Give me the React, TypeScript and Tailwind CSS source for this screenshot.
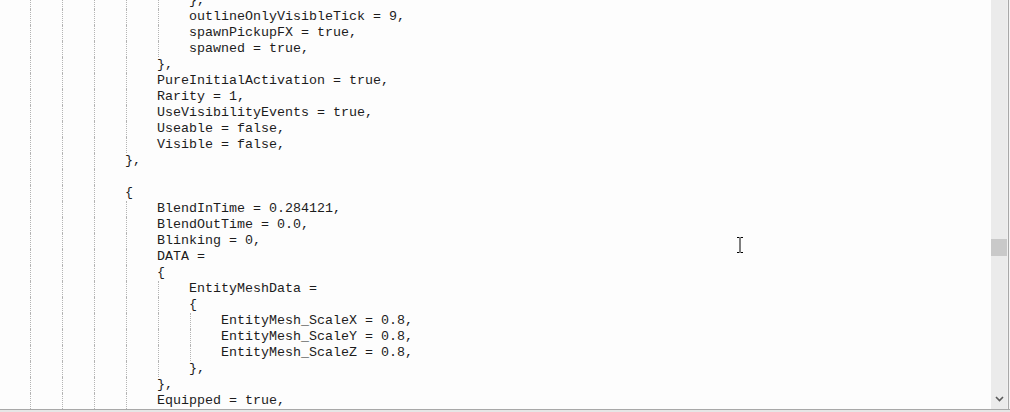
import React from 'react';

type Line = { col: number; text: string };

// code lines, col = indent in characters (col 0 sits just off the left edge)
const lines: Line[] = [
  { col: 24, text: '},' },
  { col: 24, text: 'outlineOnlyVisibleTick = 9,' },
  { col: 24, text: 'spawnPickupFX = true,' },
  { col: 24, text: 'spawned = true,' },
  { col: 20, text: '},' },
  { col: 20, text: 'PureInitialActivation = true,' },
  { col: 20, text: 'Rarity = 1,' },
  { col: 20, text: 'UseVisibilityEvents = true,' },
  { col: 20, text: 'Useable = false,' },
  { col: 20, text: 'Visible = false,' },
  { col: 16, text: '},' },
  { col: 16, text: '' },
  { col: 16, text: '{' },
  { col: 20, text: 'BlendInTime = 0.284121,' },
  { col: 20, text: 'BlendOutTime = 0.0,' },
  { col: 20, text: 'Blinking = 0,' },
  { col: 20, text: 'DATA =' },
  { col: 20, text: '{' },
  { col: 24, text: 'EntityMeshData =' },
  { col: 24, text: '{' },
  { col: 28, text: 'EntityMesh_ScaleX = 0.8,' },
  { col: 28, text: 'EntityMesh_ScaleY = 0.8,' },
  { col: 28, text: 'EntityMesh_ScaleZ = 0.8,' },
  { col: 24, text: '},' },
  { col: 20, text: '},' },
  { col: 20, text: 'Equipped = true,' },
];

const CodeLine: React.FC<{ line: Line }> = ({ line }) => {
  const stops = line.col / 4;
  return (
    <div className="flex h-[16px] items-center whitespace-pre">
      {Array.from({ length: stops }).map((_, i) => (
        <span key={i} className="flex h-[16px] w-[32px] shrink-0">
          {i > 0 && <span className="ml-px h-full border-l border-dotted border-[#b4b4b4]" />}
        </span>
      ))}
      <span className="leading-[16px]">{line.text}</span>
    </div>
  );
};

const App: React.FC = () => {
  return (
    <div className="flex h-[412px] w-[1010px] flex-col overflow-hidden bg-[#fdfdfd]">
      <div className="flex h-[409px] shrink-0">
        <div className="relative flex-1 overflow-hidden">
          <div
            className="ml-[-3px] mt-[-7px] text-[13.33px] text-[#1c1c1c]"
            style={{ fontFamily: '"Liberation Mono", "Courier New", monospace' }}
          >
            {lines.map((l, i) => (
              <CodeLine key={i} line={l} />
            ))}
          </div>
          {/* text cursor (I-beam) over the editor */}
          <svg className="absolute left-[735px] top-[236px]" width="10" height="18" viewBox="0 0 10 18">
            <path d="M2 1.5h2.5M5.5 1.5H8M5 2v14M2 16.5h2.5M5.5 16.5H8" stroke="#000" strokeWidth="1" fill="none" />
          </svg>
        </div>
        <div className="flex w-[16px] shrink-0 flex-col bg-[#ebebeb]">
          <div className="h-[239px] shrink-0" />
          <div className="h-[17px] shrink-0 bg-[#c9c9c9]" />
          <div className="flex-1" />
          <div className="flex h-[16px] shrink-0 items-center justify-center">
            <svg width="9" height="6" viewBox="0 0 9 6">
              <path d="M1 1l3.5 3.5L8 1" stroke="#5a5a5a" strokeWidth="1.6" fill="none" />
            </svg>
          </div>
          <div className="h-[2px] shrink-0" />
        </div>
        <div className="w-px shrink-0 bg-[#f0f0f0]" />
        <div className="w-px shrink-0 bg-[#a8a8a8]" />
        <div className="w-px shrink-0 bg-[#f4f4f4]" />
      </div>
      <div className="h-px shrink-0 bg-[#a8a8a8]" />
      <div className="flex-1 bg-[#e6e6e6]" />
    </div>
  );
};

export default App;
